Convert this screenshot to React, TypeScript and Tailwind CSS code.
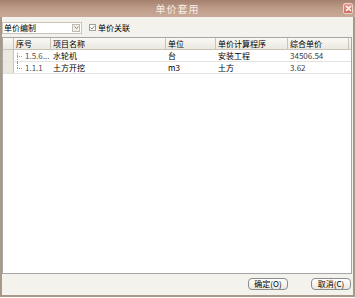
import React from 'react';

const FONT = "font-['Noto_Sans_CJK_SC','Liberation_Sans',sans-serif]";

const COLS = [
  { key: 'no', label: '序号', w: 'w-[37px]' },
  { key: 'name', label: '项目名称', w: 'w-[115px]' },
  { key: 'unit', label: '单位', w: 'w-[50px]' },
  { key: 'prog', label: '单价计算程序', w: 'w-[72px]' },
  { key: 'price', label: '综合单价', w: 'w-[61px]' },
];

const rows = [
  { no: '1.5.6...', name: '水轮机', unit: '台', prog: '安装工程', price: '34506.54' },
  { no: '1.1.1', name: '土方开挖', unit: 'm3', prog: '土方', price: '3.62' },
];

const TreeLine: React.FC<{ last?: boolean }> = ({ last }) => (
  <div className="relative w-[10px] h-full shrink-0">
    <div
      className={`absolute left-[3px] top-0 border-l border-dotted border-[#9a9a9a] ${last ? 'h-[6px]' : 'h-full top-[3px]'}`}
    />
    <div className="absolute left-[3px] top-[6px] w-[5px] border-t border-dotted border-[#9a9a9a]" />
  </div>
);

const App: React.FC = () => {
  return (
    <div className={`w-[355px] h-[298px] bg-white ${FONT} text-[9px] leading-none text-black select-none`}>
      <div className="w-[355px] h-[297px] flex flex-col border-x-2 border-b-2 border-[#a89888] bg-[#f4f2ec]">
        {/* title bar */}
        <div className="h-[17px] -mx-[2px] flex items-center justify-center relative bg-gradient-to-b from-[#a4806e] via-[#bf9c8a] to-[#c9a999]">
          <span className="text-[10px] text-[#f7eee8] tracking-[1px]">单价套用</span>
          <div className="absolute right-[2px] top-[3px] w-[10px] h-[11px] rounded-[2px] border border-[#f0d0c8] bg-gradient-to-b from-[#e79a90] to-[#cc6a60] flex items-center justify-center">
            <svg width="7" height="7" viewBox="0 0 7 7">
              <path d="M1 1L6 6M6 1L1 6" stroke="white" strokeWidth="1.4" />
            </svg>
          </div>
        </div>

        {/* toolbar */}
        <div className="h-[20px] flex items-center gap-[7px] pt-[1px]">
          <div className="w-[80px] h-[12px] bg-white border border-[#c8c4b8] flex items-center">
            <span className="flex-1 pl-[1px] text-[8px]">单价编制</span>
            <div className="w-[8px] h-[8px] mr-[1px] border border-[#c0bcb0] bg-[#f0eee6] flex items-center justify-center">
              <svg width="5" height="3" viewBox="0 0 5 3">
                <path d="M0.5 0.5L2.5 2.5L4.5 0.5" stroke="#707070" fill="none" strokeWidth="0.8" />
              </svg>
            </div>
          </div>
          <div className="flex items-center gap-[2px]">
            <div className="w-[7px] h-[7px] border border-[#a0a0a0] bg-white flex items-center justify-center">
              <svg width="5" height="5" viewBox="0 0 5 5">
                <path d="M0.5 2.5L2 4L4.5 1" stroke="#6a8a4a" fill="none" strokeWidth="0.9" />
              </svg>
            </div>
            <span className="text-[8px]">单价关联</span>
          </div>
        </div>

        {/* table */}
        <div className="h-[237px] mr-[1px] border border-[#a6a6a6] bg-white flex flex-col">
          <div className="h-[12px] flex border-b border-[#c8c4b8] bg-gradient-to-b from-[#faf9f5] to-[#ebe8df]">
            <div className="w-[11px] shrink-0 border-r border-[#c8c4b8]" />
            {COLS.map((c) => (
              <div key={c.key} className={`${c.w} shrink-0 border-r border-[#c8c4b8] flex items-center pl-[2px] text-[8px]`}>
                {c.label}
              </div>
            ))}
          </div>
          {rows.map((r, i) => (
            <div key={r.no} className="h-[12px] flex border-b border-[#e4e2dc]">
              <div className="w-[11px] shrink-0 border-r border-[#c8c4b8] bg-[#ebe8df]" />
              <div className="w-[37px] shrink-0 flex items-center">
                <TreeLine last={i === rows.length - 1} />
                <span className="text-[8px] text-[#505050] pl-[1px]">{r.no}</span>
              </div>
              <div className="w-[115px] shrink-0 flex items-center pl-[2px] text-[8px]">{r.name}</div>
              <div className="w-[50px] shrink-0 flex items-center pl-[2px] text-[8px]">{r.unit}</div>
              <div className="w-[72px] shrink-0 flex items-center pl-[2px] text-[8px]">{r.prog}</div>
              <div className="w-[61px] shrink-0 flex items-center pl-[2px] text-[8px] text-[#404040]">{r.price}</div>
            </div>
          ))}
        </div>

        {/* footer */}
        <div className="flex-1 flex items-start justify-end gap-[23px] pt-[4px] pr-[2px]">
          {['确定(O)', '取消(C)'].map((t) => (
            <button
              key={t}
              className="w-[40px] h-[12px] rounded-[4px] border border-[#8c8c8c] bg-gradient-to-b from-white to-[#ebe8e0] text-[8px] flex items-center justify-center"
            >
              {t}
            </button>
          ))}
        </div>
      </div>
    </div>
  );
};

export default App;
